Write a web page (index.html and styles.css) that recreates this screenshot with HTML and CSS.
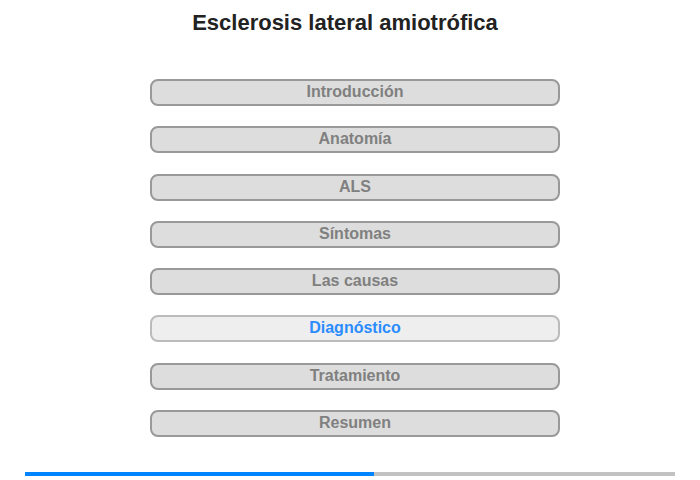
FILE: index.html
```html
<!DOCTYPE html>
<html lang="es">
<head>
<meta charset="utf-8">
<title>Esclerosis lateral amiotrófica</title>
<link rel="stylesheet" href="styles.css">
</head>
<body>
<div class="page">
  <h1 class="title">Esclerosis lateral amiotrófica</h1>
  <nav class="menu">
    <div class="item">Introducción</div>
    <div class="item">Anatomía</div>
    <div class="item">ALS</div>
    <div class="item">Síntomas</div>
    <div class="item">Las causas</div>
    <div class="item active">Diagnóstico</div>
    <div class="item">Tratamiento</div>
    <div class="item">Resumen</div>
  </nav>
  <div class="progress"><div class="fill" style="width:53.7%"></div></div>
</div>
</body>
</html>
```
FILE: styles.css
```css
html, body {
  margin: 0;
  padding: 0;
  background: #fff;
}
.page {
  width: 700px;
  font-family: "Liberation Sans", Arial, sans-serif;
}
.title {
  margin: 0;
  padding: 10px 10px 0 0;
  font-size: 22px;
  line-height: 26px;
  font-weight: bold;
  color: #222;
  text-align: center;
}
.menu {
  display: flex;
  flex-direction: column;
  gap: 20.3px;
  margin: 43px 0 0 150px;
  width: 410px;
}
.item {
  box-sizing: border-box;
  height: 27px;
  border: 2px solid #999;
  border-radius: 8px;
  background: #ddd;
  color: #808080;
  font-size: 16px;
  font-weight: bold;
  line-height: 21px;
  text-align: center;
}
.item.active {
  background: #eee;
  border-color: #bbb;
  color: #2a8cff;
}
.progress {
  margin: 35px 0 0 25px;
  width: 650px;
  height: 4px;
  background: #c2c2c2;
  display: flex;
}
.fill {
  height: 100%;
  background: #0084ff;
}
```
